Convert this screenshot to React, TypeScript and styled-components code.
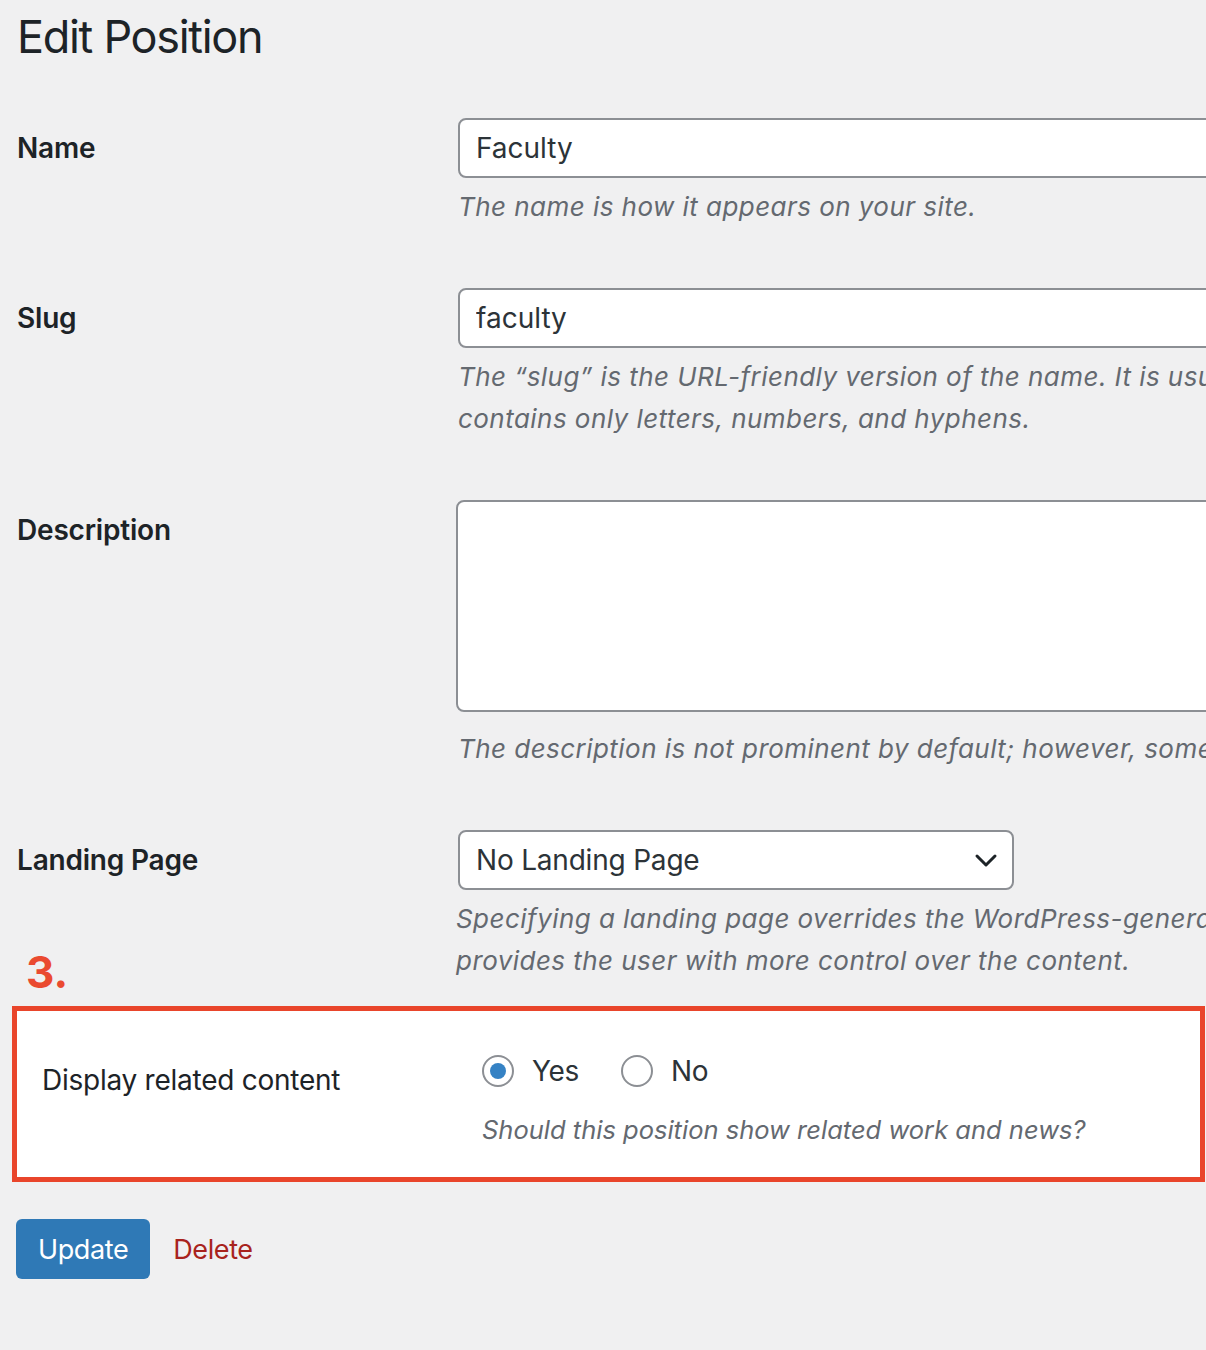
import React from "react";
import styled, { createGlobalStyle } from "styled-components";

const GlobalStyle = createGlobalStyle`
  html, body {
    margin: 0;
    padding: 0;
    background: #f0f0f1;
    overflow-x: hidden;
  }
  body {
    font-family: Inter, "Noto Sans", "Liberation Sans", sans-serif;
    color: #1d2327;
  }
  * { box-sizing: border-box; }
`;

const Page = styled.div`
  padding: 9px 0 60px 16px;
  width: 1206px;
  overflow: hidden;
`;

const Title = styled.h1`
  margin: 0 0 24px 1px;
  font-size: 45px;
  font-weight: 400;
  line-height: 55px;
  color: #1d2327;
  letter-spacing: -1.3px;
`;

const FormTable = styled.div`
  display: flex;
  flex-direction: column;
`;

const Row = styled.div`
  display: flex;
  align-items: flex-start;
`;

const Label = styled.label`
  flex: 0 0 420px;
  padding: 40px 0 0 1px;
  font-size: 28px;
  font-weight: 600;
  line-height: 40px;
  color: #1d2327;
  letter-spacing: -0.2px;
`;

const Field = styled.div`
  flex: 1 1 auto;
  min-width: 0;
  padding: 30px 0 30px 20px;
`;

const TextInput = styled.input`
  display: block;
  margin-left: 2px;
  width: 1200px;
  height: 60px;
  padding: 0 16px;
  border: 2px solid #8c8f94;
  border-radius: 8px;
  background: #fff;
  font-family: inherit;
  font-size: 28px;
  color: #2c3338;
  outline: none;
`;

const TextArea = styled.textarea`
  display: block;
  width: 1200px;
  height: 212px;
  margin: 0 0 16px;
  padding: 12px 16px;
  border: 2px solid #8c8f94;
  border-radius: 8px;
  background: #fff;
  font-family: inherit;
  font-size: 28px;
  resize: none;
  outline: none;
`;

const Description = styled.p<{ $inset?: number; $gap?: number; $compact?: boolean }>`
  margin: ${(p) => p.$gap ?? 8}px 0 0 ${(p) => p.$inset ?? 0}px;
  font-size: ${(p) => (p.$compact ? 25.5 : 26)}px;
  font-style: italic;
  line-height: 42px;
  letter-spacing: ${(p) => (p.$compact ? 0 : 0.45)}px;
  color: #646970;
  white-space: nowrap;
`;

const SelectBox = styled.div`
  margin-left: 2px;
  width: 556px;
  height: 60px;
  display: flex;
  align-items: center;
  justify-content: space-between;
  padding: 0 14px 0 16px;
  border: 2px solid #8c8f94;
  border-radius: 8px;
  background: #fff;
  font-size: 28px;
  color: #2c3338;
  letter-spacing: -0.2px;
`;

const Highlight = styled.div`
  position: relative;
  margin: -6px 0 0 -4px;
  width: 1193px;
  display: flex;
  align-items: flex-start;
  background: #fff;
  border: 5px solid #e9452b;
`;

/* numbered callout sitting above the framed row */
const StepMark = styled.span`
  position: absolute;
  left: 9px;
  top: -61px;
  font-size: 44px;
  font-weight: 700;
  line-height: 44px;
  color: #ea4a30;
`;

const PlainLabel = styled.div`
  flex: 0 0 465px;
  padding: 49px 0 0 25px;
  font-size: 28px;
  line-height: 40px;
  color: #1d2327;
  letter-spacing: -0.25px;
`;

const RadioField = styled.div`
  padding: 44px 0 26px 0;
`;

const RadioRow = styled.div`
  display: flex;
  align-items: center;
  gap: 42px;
  height: 32px;
`;

const RadioOption = styled.label`
  display: flex;
  align-items: center;
  gap: 18px;
  font-size: 28px;
  color: #2c3338;
  letter-spacing: -0.3px;
`;

const RadioCircle = styled.span<{ $checked?: boolean }>`
  width: 32px;
  height: 32px;
  border-radius: 50%;
  border: 2px solid #8c8f94;
  background: #fff;
  display: flex;
  align-items: center;
  justify-content: center;
  &::after {
    content: "";
    display: ${(p) => (p.$checked ? "block" : "none")};
    width: 16px;
    height: 16px;
    border-radius: 50%;
    background: #3582c4;
  }
`;

const Actions = styled.div`
  display: flex;
  align-items: center;
  gap: 23px;
  margin-top: 37px;
`;

const PrimaryButton = styled.button`
  height: 60px;
  padding: 0 22px;
  border: none;
  border-radius: 6px;
  background: #2f79b6;
  color: #fff;
  font-family: inherit;
  font-size: 27px;
  letter-spacing: -0.4px;
  cursor: pointer;
`;

const DeleteLink = styled.a`
  font-size: 27px;
  letter-spacing: -0.4px;
  color: #a8231d;
  text-decoration: none;
`;

const Chevron = () => (
  <svg width="24" height="16" viewBox="0 0 24 16" fill="none">
    <path d="M3 4l9 9 9-9" stroke="#1d2327" strokeWidth="3" strokeLinecap="round" strokeLinejoin="round" />
  </svg>
);

export default function App() {
  return (
    <>
      <GlobalStyle />
      <Page>
        <Title>Edit Position</Title>
        <FormTable>
          <Row>
            <Label>Name</Label>
            <Field>
              <TextInput defaultValue="Faculty" />
              <Description $inset={2}>The name is how it appears on your site.</Description>
            </Field>
          </Row>
          <Row>
            <Label>Slug</Label>
            <Field>
              <TextInput defaultValue="faculty" />
              <Description $inset={2}>
                The “slug” is the URL-friendly version of the name. It is usually all lowercase and
                <br />
                contains only letters, numbers, and hyphens.
              </Description>
            </Field>
          </Row>
          <Row>
            <Label>Description</Label>
            <Field>
              <TextArea />
              <Description $inset={2} $gap={0}>
                The description is not prominent by default; however, some themes may show it.
              </Description>
            </Field>
          </Row>
          <Row>
            <Label>Landing Page</Label>
            <Field>
              <SelectBox>
                <span>No Landing Page</span>
                <Chevron />
              </SelectBox>
              <Description>
                Specifying a landing page overrides the WordPress-generated archive page and
                <br />
                provides the user with more control over the content.
              </Description>
            </Field>
          </Row>
        </FormTable>

        <Highlight>
          <StepMark>3.</StepMark>
          <PlainLabel>Display related content</PlainLabel>
          <RadioField>
            <RadioRow>
              <RadioOption>
                <RadioCircle $checked />
                Yes
              </RadioOption>
              <RadioOption>
                <RadioCircle />
                No
              </RadioOption>
            </RadioRow>
            <Description $gap={22} $compact>
              Should this position show related work and news?
            </Description>
          </RadioField>
        </Highlight>

        <Actions>
          <PrimaryButton>Update</PrimaryButton>
          <DeleteLink href="#">Delete</DeleteLink>
        </Actions>
      </Page>
    </>
  );
}
